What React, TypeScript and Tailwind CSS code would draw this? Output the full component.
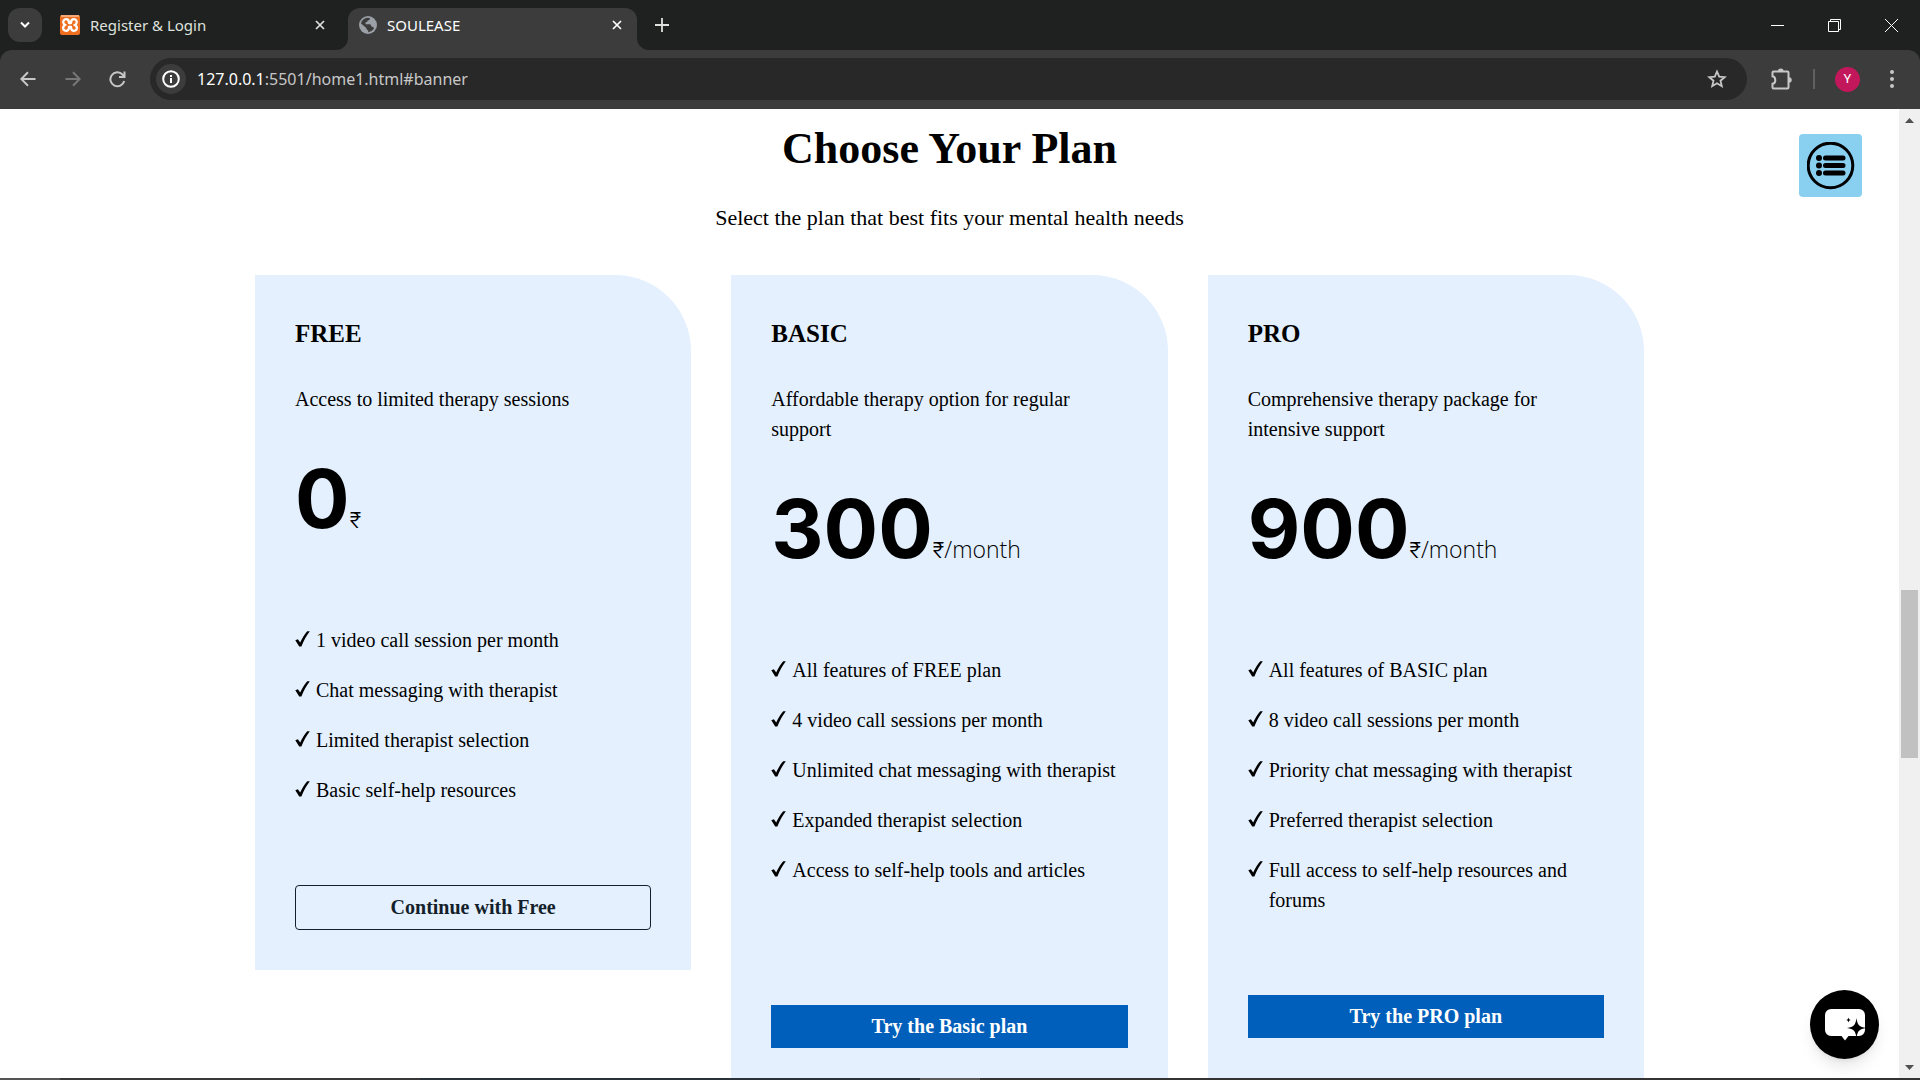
import React from "react";

type Plan = {
  name: string;
  description: string;
  price: string;
  period?: string;
  features: string[];
  action: string;
  outlined?: boolean;
  actionGap: string;
};

const plans: Plan[] = [
  {
    name: "FREE",
    description: "Access to limited therapy sessions",
    price: "0",
    features: [
      "1 video call session per month",
      "Chat messaging with therapist",
      "Limited therapist selection",
      "Basic self-help resources",
    ],
    action: "Continue with Free",
    outlined: true,
    actionGap: "mt-20",
  },
  {
    name: "BASIC",
    description: "Affordable therapy option for regular support",
    price: "300",
    period: "/month",
    features: [
      "All features of FREE plan",
      "4 video call sessions per month",
      "Unlimited chat messaging with therapist",
      "Expanded therapist selection",
      "Access to self-help tools and articles",
    ],
    action: "Try the Basic plan",
    actionGap: "mt-30",
  },
  {
    name: "PRO",
    description: "Comprehensive therapy package for intensive support",
    price: "900",
    period: "/month",
    features: [
      "All features of BASIC plan",
      "8 video call sessions per month",
      "Priority chat messaging with therapist",
      "Preferred therapist selection",
      "Full access to self-help resources and forums",
    ],
    action: "Try the PRO plan",
    actionGap: "mt-20",
  },
];

function CloseIcon() {
  return (
    <svg width="10" height="10" viewBox="0 0 10 10" fill="none" stroke="currentColor" strokeWidth="1.7">
      <path d="M1 1l8 8M9 1L1 9" />
    </svg>
  );
}

function TabStrip() {
  return (
    <div className="flex h-[50px] items-stretch bg-[#1f2120] font-['Noto_Sans',sans-serif] text-[15px] text-[#dfe1df]">
      <button aria-label="Search tabs" className="ml-2 mt-2 flex h-[34px] w-[34px] items-center justify-center rounded-xl bg-[#3c3c3c] text-white">
        <svg width="12" height="8" viewBox="0 0 12 8" fill="none" stroke="currentColor" strokeWidth="2">
          <path d="M2 1.5l4 4 4-4" />
        </svg>
      </button>
      <div className="ml-[18px] flex w-[288px] items-center pr-[23px]">
        <svg width="20" height="20" viewBox="0 0 20 20">
          <rect width="20" height="20" rx="2" fill="#ee6f20" />
          <rect x="1" y="0" width="18" height="2" fill="#f7a878" />
          <path d="M6.2 4.2C3.8 4.2 3 6 3.3 7.600 3.500 8.800 4.500 9.700 5.500 10 3.900 10.400 3 12 3.200 13.500 3.500 15.400 5.500 16.200 7.200 15.600 8.800 15 9 13.300 9 12h2c0 1.300.2 3 1.800 3.600 1.700.6 3.700-.2 4-2.100.2-1.500-.7-3.100-2.300-3.500 1-.3 2-1.200 2.200-2.400C17 6 16.200 4.200 13.800 4.200 12 4.200 11 5.500 11 8H9C9 5.500 8 4.200 6.200 4.200z" fill="none" stroke="#fff" strokeWidth="2.300" strokeLinejoin="round" />
        </svg>
        <span className="ml-2.5 flex-1">Register &amp; Login</span>
        <button aria-label="Close Register & Login"><CloseIcon /></button>
      </div>
      <div className="relative mt-2 flex w-[289px] items-center rounded-t-xl bg-[#3c3c3c] pb-2 pl-[11px] pr-[15px] text-white">
        <svg className="absolute -left-3 bottom-0" width="12" height="12" viewBox="0 0 12 12"><path d="M12 0v12H0A12 12 0 0 0 12 0z" fill="#3c3c3c" /></svg>
        <svg className="absolute -right-3 bottom-0" width="12" height="12" viewBox="0 0 12 12"><path d="M0 0v12h12A12 12 0 0 1 0 0z" fill="#3c3c3c" /></svg>
        <svg width="18" height="18" viewBox="0 0 18 18">
          <circle cx="9" cy="9" r="9" fill="#9aa0a6" />
          <path d="M8 1.800L10.800 2c.4 1.600-.6 2.400-2 2.600-.3 1.200-1 1.800-2.300 1.900v1.800h4.200c1.200 0 1.600 1 1.600 2.300 1.500.1 2.400.8 2.700 2C13.400 14.800 11.500 16 9.200 16.200v-1.900c-1.200-.1-1.800-.8-1.800-2.200L2 7.500C2.600 4.500 4.900 2.200 8 1.800z" fill="#3c3c3c" />
        </svg>
        <span className="ml-2.5 flex-1">SOULEASE</span>
        <button aria-label="Close SOULEASE"><CloseIcon /></button>
      </div>
      <button aria-label="New tab" className="ml-[18px]">
        <svg width="14" height="14" viewBox="0 0 14 14" stroke="currentColor" strokeWidth="1.800"><path d="M7 0v14M0 7h14" /></svg>
      </button>
      <div className="ml-auto flex items-center gap-[44px] pr-[22px] text-white">
        <button aria-label="Minimize"><svg width="13" height="13" viewBox="0 0 13 13" stroke="currentColor"><path d="M0 6.500h13" /></svg></button>
        <button aria-label="Restore"><svg width="13" height="13" viewBox="0 0 13 13" fill="none" stroke="currentColor"><path d="M.5 2.500h10v10h-10zM2.500 2.500v-2h10v10h-2" /></svg></button>
        <button aria-label="Close window"><svg width="13" height="13" viewBox="0 0 13 13" stroke="currentColor"><path d="M0 0l13 13M13 0L0 13" /></svg></button>
      </div>
    </div>
  );
}

function Toolbar() {
  return (
    <div className="bg-[#1f2120]">
      <div className="flex h-[59px] items-center rounded-t-xl bg-[#3c3c3c] pb-px pl-5 pr-[26px] text-[#c7c7c7]">
        <button aria-label="Back">
          <svg width="16" height="16" viewBox="0 0 16 16" fill="none" stroke="currentColor" strokeWidth="2"><path d="M15.500 8H1.500M8 1.200L1.300 8 8 14.800" /></svg>
        </button>
        <button aria-label="Forward" className="ml-[29px] text-[#777]">
          <svg width="16" height="16" viewBox="0 0 16 16" fill="none" stroke="currentColor" strokeWidth="2"><path d="M.5 8h14M8 1.200L14.700 8 8 14.800" /></svg>
        </button>
        <button aria-label="Reload" className="ml-[28px]">
          <svg width="17" height="17" viewBox="0 0 17 17" fill="none" stroke="currentColor" strokeWidth="2"><path d="M15.200 10A7 7 0 1 1 13.500 3.500L15.500 5.500M15.500 .5V6H10" /></svg>
        </button>
        <div className="ml-6 flex h-[42px] flex-1 items-center rounded-full bg-[#282828] pl-1.5 pr-5">
          <button aria-label="Site information" className="flex h-[30px] w-[30px] items-center justify-center rounded-full bg-[#3c3c3c] text-white">
            <svg width="18" height="18" viewBox="0 0 18 18" fill="none" stroke="currentColor" strokeWidth="2"><circle cx="9" cy="9" r="7.800" /><path d="M9 8v5M9 5v2" /></svg>
          </button>
          <div className="ml-[11px] flex-1 font-['Noto_Sans',sans-serif] text-base text-[#c7c7c7]">
            <span className="text-white">127.0.0.1</span>:5501/home1.html#banner
          </div>
          <button aria-label="Bookmark this tab">
            <svg width="20" height="20" viewBox="0 0 20 20" fill="none" stroke="currentColor" strokeWidth="1.800"><path d="M10 2.500l2.200 5.100 5.500.5-4.200 3.600 1.300 5.500-4.800-2.900-4.800 2.900 1.300-5.500L2.300 8.100l5.500-.5z" /></svg>
          </button>
        </div>
        <button aria-label="Extensions" className="ml-6">
          <svg width="21" height="22" viewBox="0 0 21 22" fill="none" stroke="currentColor" strokeWidth="2"><path d="M2.500 3.500H16.500a1 1 0 0 1 1 1V19.500a1 1 0 0 1-1 1H2.500a1 1 0 0 1-1-1V15.800C3.200 15.600 4.300 14 4.300 12.200S3.200 8.600 1.500 8.300V4.500a1 1 0 0 1 1-1z" /><path d="M7 3a2.800 2.500 0 0 1 5.600 0zM18 9.200a2.700 2.700 0 0 1 0 5.400z" fill="currentColor" stroke="none" /></svg>
        </button>
        <div className="ml-[21px] h-5 w-0.5 bg-[#5f6060]" />
        <button aria-label="Profile" className="ml-5 flex h-[25px] w-[25px] items-center justify-center rounded-full bg-[#c2185b] font-[Roboto,sans-serif] text-[13px] text-white">Y</button>
        <button aria-label="Menu" className="ml-[30px]">
          <svg width="4" height="18" viewBox="0 0 4 18" fill="currentColor"><circle cx="2" cy="2" r="2" /><circle cx="2" cy="9" r="2" /><circle cx="2" cy="16" r="2" /></svg>
        </button>
      </div>
    </div>
  );
}

function PlanCard({ plan }: { plan: Plan }) {
  return (
    <article className="flex-1 rounded-tr-[76px] bg-[#e4f0fe] p-10">
      <h2 className="text-[25px] leading-[38px] font-bold">{plan.name}</h2>
      <p className="mt-[31px] text-xl leading-[30px]">{plan.description}</p>
      <p className="mt-7 font-[Inter,sans-serif]">
        <span className="text-[81px] leading-[114px] font-bold">{plan.price}</span>
        <span className="text-[22px] leading-none font-light">₹</span>
        {plan.period && (
          <span className="font-['Open_Sans',sans-serif] text-[23px] leading-none font-light">{plan.period}</span>
        )}
      </p>
      <ul className="mt-[69px] flex flex-col gap-5 text-xl leading-[30px]">
        {plan.features.map((feature) => (
          <li key={feature} className="flex gap-1.5">
            <svg className="mt-1.5 shrink-0" width="15" height="16" viewBox="0 0 15 16">
              <path d="M.3 9.300l2.600-1 2.300 3.300C7 7.500 9.500 3 12.200.2h2.600C11.500 4.600 8.700 9.500 6.400 15.500H4.200z" />
            </svg>
            <span>{feature}</span>
          </li>
        ))}
      </ul>
      <button
        className={`${plan.actionGap} w-full text-xl leading-[23px] font-bold ${
          plan.outlined ? "rounded border border-[#141f2b] py-2.5 text-[#141f2b]" : "bg-[#005fba] py-2.5 text-white"
        }`}
      >
        {plan.action}
      </button>
    </article>
  );
}

export default function App() {
  return (
    <div className="flex h-screen flex-col overflow-hidden bg-white">
      <TabStrip />
      <Toolbar />
      <div className="relative flex min-h-0 flex-1">
        <main className="min-w-0 flex-1 overflow-hidden px-[255px] font-['Liberation_Serif',serif] text-black">
          <h1 className="mt-3 text-center text-[44px] leading-14 font-bold">Choose Your Plan</h1>
          <p className="mt-[26px] text-center text-[22px] leading-[30px]">Select the plan that best fits your mental health needs</p>
          <div className="mt-[42px] flex items-start gap-10">
            {plans.map((plan) => <PlanCard key={plan.name} plan={plan} />)}
          </div>
        </main>
        <div className="flex w-[21px] flex-col items-center bg-[#f0f0f0] py-2">
          <svg className="mt-px" width="9" height="5" viewBox="0 0 9 5"><path d="M0 5L4.500 0 9 5z" fill="#505050" /></svg>
          <div className="mt-[467px] h-[168px] w-[17px] bg-[#c1c1c1]" />
          <svg className="mt-auto" width="9" height="5" viewBox="0 0 9 5"><path d="M0 0l4.500 5L9 0z" fill="#505050" /></svg>
        </div>
        <button aria-label="Open menu" className="absolute right-[58px] top-[25px] flex h-[63px] w-[63px] items-center justify-center rounded bg-[#89cff0]">
          <svg width="48" height="48" viewBox="0 0 48 48">
            <circle cx="23.500" cy="23.500" r="22.300" fill="none" stroke="#000" strokeWidth="3" />
            <g stroke="#000" strokeWidth="5" strokeLinecap="round"><path d="M18.500 16h17.500M18.500 23.500h17.500M18.500 31h17.500" /></g>
            <circle cx="12" cy="16" r="3" /><circle cx="12" cy="23.500" r="3" /><circle cx="12" cy="31" r="3" />
          </svg>
        </button>
        <button aria-label="Open chat" className="absolute bottom-[19px] right-[41px] flex h-[69px] w-[69px] items-center justify-center rounded-full bg-black shadow-lg">
          <svg width="40" height="32" viewBox="0 0 40 32">
            <path d="M6 0H34a6 6 0 0 1 6 6V21a6 6 0 0 1-6 6H23.500L20 31.500 16.500 27H6a6 6 0 0 1-6-6V6a6 6 0 0 1 6-6z" fill="#fff" />
            <path d="M31.500 9C32.500 16 34 17.800 41 19 34 20.200 32.500 22 31.500 29 30.500 22 29 20.200 22 19 29 17.800 30.500 16 31.500 9zM23.500 8.500c.4 1.700.8 2.100 2.500 2.500-1.700.4-2.100.8-2.500 2.500-.4-1.700-.8-2.100-2.500-2.500 1.700-.4 2.100-.8 2.500-2.500z" fill="#000" />
          </svg>
        </button>
      </div>
      <div className="flex h-0.5 bg-[#333]">
        <div className="w-[60px] bg-[#555]" /><div className="w-[360px] bg-[#38383a]" /><div className="w-[500px] bg-[#2b3138]" /><div className="w-[60px] bg-[#5a5a5a]" />
      </div>
    </div>
  );
}
